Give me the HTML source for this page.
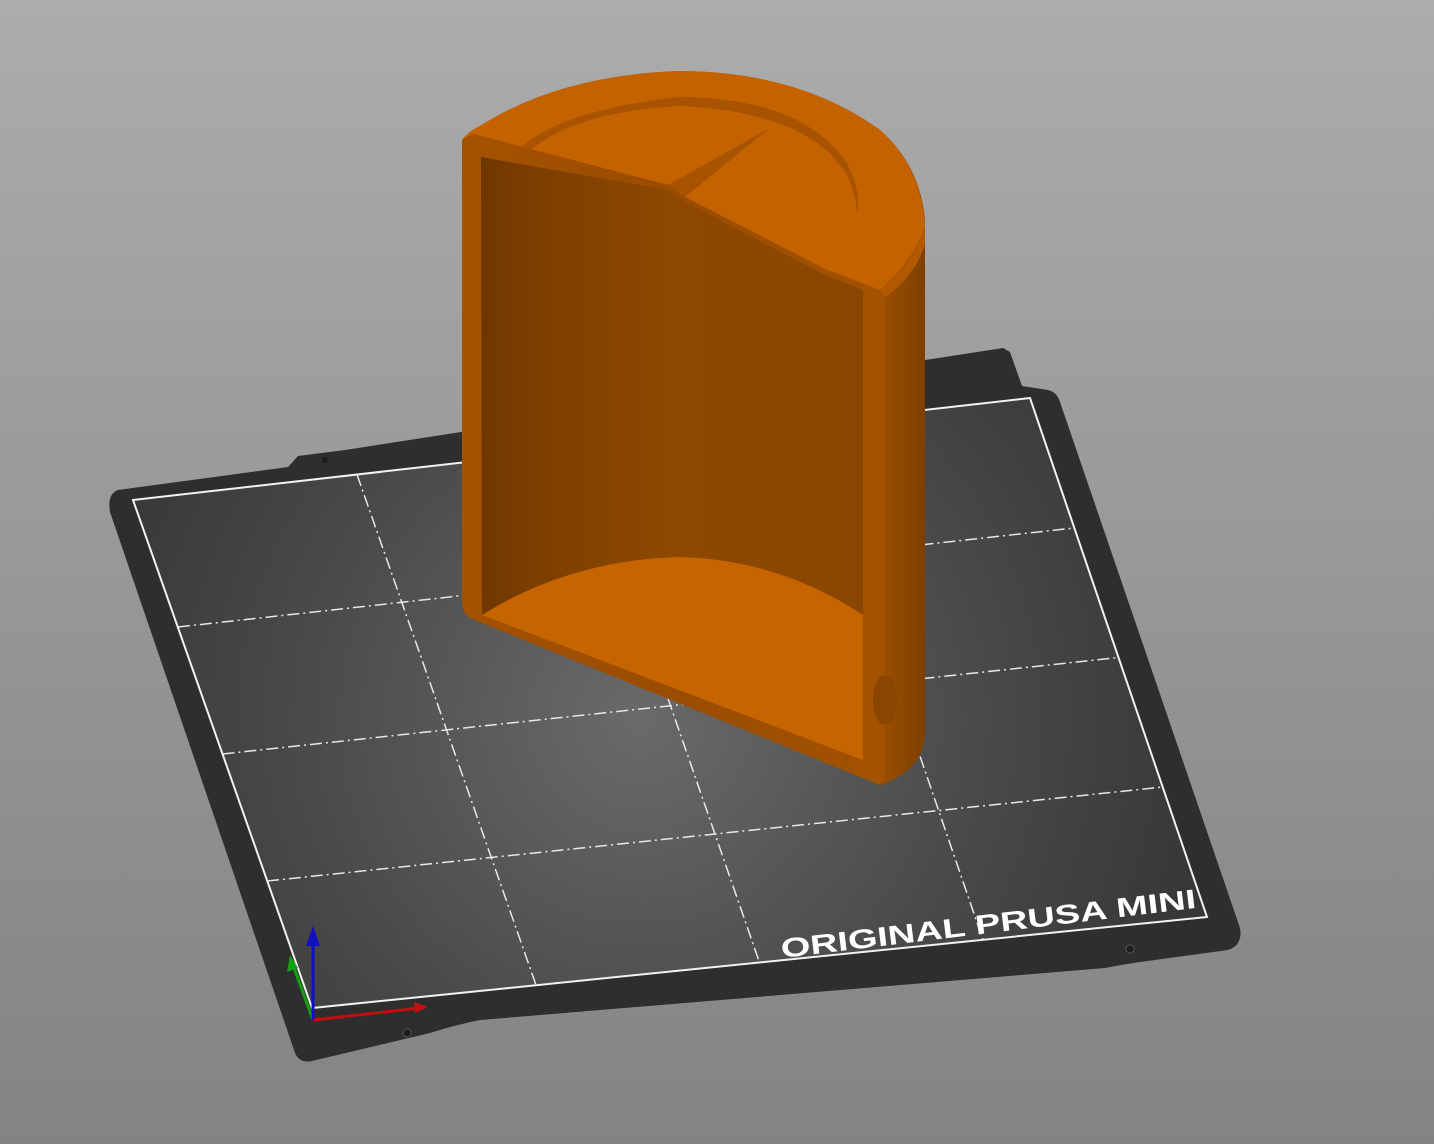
<!DOCTYPE html>
<html><head><style>
html,body{margin:0;padding:0;width:1434px;height:1144px;overflow:hidden}
svg{display:block}
</style></head><body>
<svg width="1434" height="1144" viewBox="0 0 1434 1144" xmlns="http://www.w3.org/2000/svg">
<defs>
<linearGradient id="bg" x1="0" y1="0" x2="0" y2="1">
<stop offset="0" stop-color="#acacac"/><stop offset="1" stop-color="#838383"/>
</linearGradient>
<radialGradient id="bed" cx="640" cy="720" r="560" gradientUnits="userSpaceOnUse">
<stop offset="0" stop-color="#6a6a6a"/><stop offset="0.6" stop-color="#4a4a4a"/><stop offset="1" stop-color="#383838"/>
</radialGradient>
<linearGradient id="cav" x1="481" y1="0" x2="865" y2="0" gradientUnits="userSpaceOnUse">
<stop offset="0" stop-color="#6e3600"/><stop offset="0.1" stop-color="#7a3d00"/><stop offset="0.5" stop-color="#8e4800"/><stop offset="1" stop-color="#8a4600"/>
</linearGradient>
<linearGradient id="wall" x1="462" y1="0" x2="885" y2="0" gradientUnits="userSpaceOnUse">
<stop offset="0" stop-color="#a45200"/><stop offset="0.5" stop-color="#9a4c00"/><stop offset="1" stop-color="#a25200"/>
</linearGradient>
<linearGradient id="side" x1="880" y1="0" x2="926" y2="0" gradientUnits="userSpaceOnUse">
<stop offset="0" stop-color="#9c4e00"/><stop offset="1" stop-color="#7e4000"/>
</linearGradient>
</defs>
<rect width="1434" height="1144" fill="url(#bg)"/>
<!-- bed -->
<path d="M118,490 L288,467 L298,456 L345,450 L1003,348 L1010,352 L1022,386 L1048,390 Q1057,392 1060,402 L1240,928 Q1243,945 1228,950 L1140,962 Q1120,965 1105,968 L480,1020 Q455,1025 430,1033 L312,1061 Q298,1064 294,1050 L110,512 Q107,494 118,490 Z" fill="#2e2e2e"/>
<polygon points="133,500 1030,398 1207,917 312,1008" fill="url(#bed)" stroke="#f2f2f2" stroke-width="2"/>
<g stroke="#e8e8e8" stroke-width="1.5" stroke-dasharray="12,4,2,4" fill="none">
<line x1="357" y1="474.5" x2="536" y2="985"/>
<line x1="581.5" y1="449" x2="759.5" y2="962.5"/>
<line x1="806" y1="423.5" x2="983" y2="940"/>
<line x1="178" y1="627" x2="1074" y2="528"/>
<line x1="222.5" y1="754" x2="1118.5" y2="657.5"/>
<line x1="267" y1="881" x2="1163" y2="787"/>
</g>
<circle cx="407" cy="1033" r="4" fill="#1c1c1c" stroke="#555" stroke-width="1"/>
<circle cx="1130" cy="949" r="4" fill="#1c1c1c" stroke="#555" stroke-width="1"/>
<circle cx="325" cy="460" r="3" fill="#1c1c1c"/>
<text x="0" y="0" transform="translate(782,958) rotate(-6.9)" fill="#ffffff" font-family="Liberation Sans, sans-serif" font-weight="bold" font-size="27" textLength="418" lengthAdjust="spacingAndGlyphs">ORIGINAL PRUSA MINI</text>
<!-- axes -->
<line x1="313" y1="1020" x2="420" y2="1008" stroke="#c01010" stroke-width="3"/>
<polygon points="428,1007 414,1002 415,1013" fill="#c01010"/>
<line x1="313" y1="1020" x2="293" y2="965" stroke="#10a010" stroke-width="3"/>
<polygon points="290,955 287,972 298,968" fill="#10a010"/>
<line x1="313" y1="1020" x2="313" y2="940" stroke="#1010c0" stroke-width="3"/>
<polygon points="313,926 306,946 320,946" fill="#1010c0"/>
<!-- object silhouette -->
<path d="M462,140 Q470,130 480,126 Q560,75 680,71 Q800,72 880,130 Q920,165 925,220 L925,735 Q923,770 880,785 L470,618 Q462,612 462,600 Z" fill="#9a4c00"/>
<!-- left bumps -->
<path d="M462,505 Q475,530 462,565 Q472,580 462,590 Z" fill="#9a4c00"/>
<!-- right outer side -->
<path d="M880,290 L925,240 L925,735 Q923,770 880,785 Z" fill="url(#side)"/>
<!-- top cap -->
<path d="M462,140 Q470,130 480,126 Q560,75 680,71 Q800,72 880,130 Q920,165 925,225 Q915,260 880,290 L827,270 L685,197 L668,185 L473,134 Z" fill="#c46200"/>
<path d="M880,290 Q915,262 925,225 L925,245 Q915,275 885,298 Z" fill="#b35a00"/>
<!-- groove -->
<path d="M518,150 Q560,110 680,97 Q800,98 845,160 Q862,190 857,215 Q856,185 840,165 Q800,112 680,106 Q570,112 525,155 Z" fill="#a85300"/>
<path d="M668,185 L770,128 L685,197 Z" fill="#a85300"/>
<!-- cut face walls -->
<path d="M462,140 L473,134 L668,185 L685,197 L827,270 L880,290 L885,300 L885,780 L880,785 L470,618 Q462,612 462,600 Z" fill="url(#wall)"/>
<!-- cavity -->
<path d="M481,157 L668,190 L685,202 L827,276 L863,290 L863,615 Q780,560 680,557 Q570,560 482,615 Z" fill="url(#cav)"/>
<!-- floor -->
<path d="M482,615 Q570,560 680,557 Q780,560 863,615 L863,760 Z" fill="#c66400"/>
<!-- right hole -->
<ellipse cx="885" cy="700" rx="12" ry="25" fill="#8a4500"/>
</svg>
</body></html>
